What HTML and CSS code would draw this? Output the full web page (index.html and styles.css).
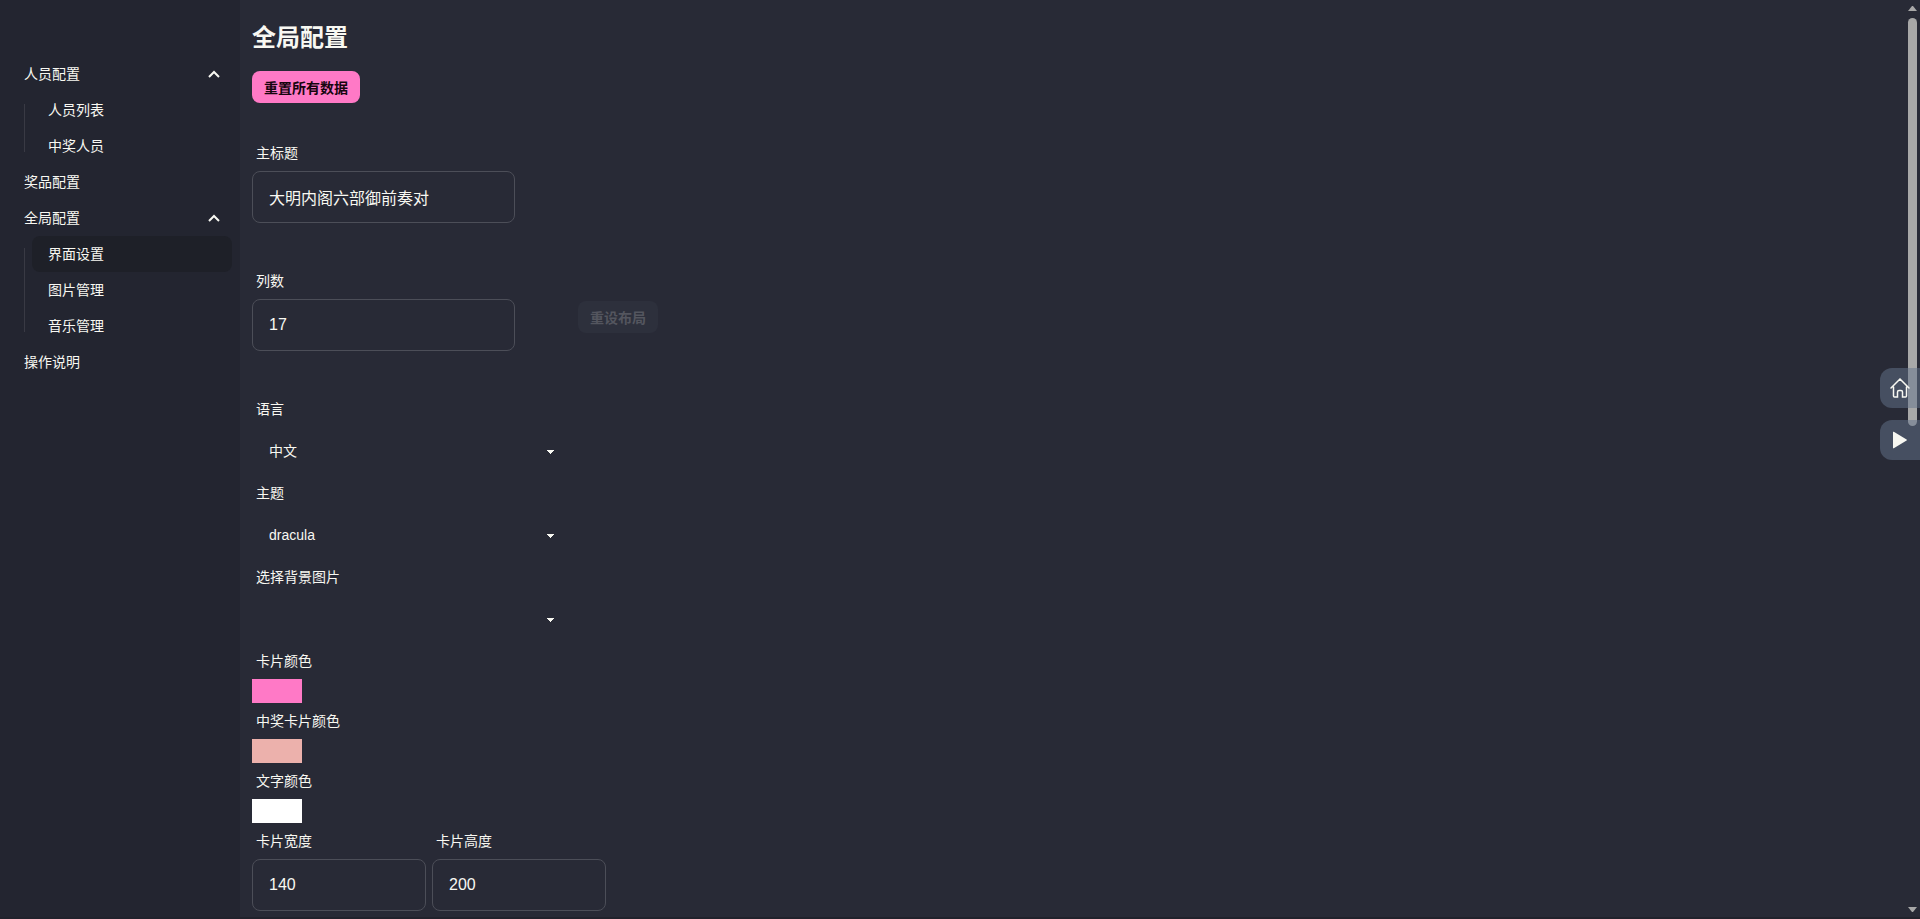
FILE: index.html
```html
<!DOCTYPE html>
<html lang="zh-CN">
<head>
    <meta charset="UTF-8">
    <title>全局配置</title>
    <link rel="stylesheet" href="styles.css">
</head>
<body>
    <div class="layout">
        <nav class="sidebar">
            <ul class="menu">
                <li>
                    <details open>
                        <summary>人员配置
                            <svg class="chevron" viewBox="0 0 12 8"><path d="M1 7l5-5 5 5"/></svg>
                        </summary>
                        <ul class="submenu">
                            <li><a href="#">人员列表</a></li>
                            <li><a href="#">中奖人员</a></li>
                        </ul>
                    </details>
                </li>
                <li><a href="#">奖品配置</a></li>
                <li>
                    <details open>
                        <summary>全局配置
                            <svg class="chevron" viewBox="0 0 12 8"><path d="M1 7l5-5 5 5"/></svg>
                        </summary>
                        <ul class="submenu">
                            <li><a href="#" class="active">界面设置</a></li>
                            <li><a href="#">图片管理</a></li>
                            <li><a href="#">音乐管理</a></li>
                        </ul>
                    </details>
                </li>
                <li><a href="#">操作说明</a></li>
            </ul>
        </nav>

        <main class="content">
            <h2>全局配置</h2>
            <button type="button" class="btn btn-primary">重置所有数据</button>

            <div class="form">
                <div class="row tall">
                    <div class="field">
                        <label for="topTitle">主标题</label>
                        <input type="text" id="topTitle" class="input" value="大明内阁六部御前奏对">
                    </div>
                </div>
                <div class="row tall">
                    <div class="field">
                        <label for="columns">列数</label>
                        <input type="number" id="columns" class="input" value="17">
                    </div>
                    <button type="button" class="btn" disabled>重设布局</button>
                </div>
                <div class="field">
                    <label for="language">语言</label>
                    <select id="language" class="select">
                        <option>中文</option>
                        <option>English</option>
                    </select>
                </div>
                <div class="field">
                    <label for="theme">主题</label>
                    <select id="theme" class="select">
                        <option>dracula</option>
                        <option>light</option>
                        <option>dark</option>
                    </select>
                </div>
                <div class="field">
                    <label for="background">选择背景图片</label>
                    <select id="background" class="select">
                        <option></option>
                    </select>
                </div>
                <div class="field">
                    <label for="cardColor">卡片颜色</label>
                    <input type="color" id="cardColor" class="color" value="#ff79c6">
                </div>
                <div class="field">
                    <label for="luckyColor">中奖卡片颜色</label>
                    <input type="color" id="luckyColor" class="color" value="#ecb1ac">
                </div>
                <div class="field">
                    <label for="textColor">文字颜色</label>
                    <input type="color" id="textColor" class="color" value="#ffffff">
                </div>
                <div class="row">
                    <div class="field small">
                        <label for="cardWidth">卡片宽度</label>
                        <input type="number" id="cardWidth" class="input" value="140">
                    </div>
                    <div class="field small">
                        <label for="cardHeight">卡片高度</label>
                        <input type="number" id="cardHeight" class="input" value="200">
                    </div>
                </div>
            </div>
        </main>
    </div>

    <div class="scrollbar" aria-hidden="true">
        <span class="arrow up"></span>
        <span class="thumb"></span>
        <span class="arrow down"></span>
    </div>

    <div class="float-buttons">
        <button type="button" aria-label="首页">
            <svg viewBox="0 0 20 20"><path class="line" d="M1 10L10 1l9 9M3.500 9v9q0 1 1 1h3v-5q0-1.500 1.500-1.500h2q1.500 0 1.500 1.500v5h3q1 0 1-1V9"/></svg>
        </button>
        <button type="button" aria-label="播放">
            <svg viewBox="0 0 20 20"><path class="solid" d="M3 2.300v15.400q0 1 .8.500l12.800-7.600q.8-.6 0-1.200L3.800 1.800q-.8-.5-.8.500z"/></svg>
        </button>
    </div>
</body>
</html>
```
FILE: styles.css
```css
* {
    box-sizing: border-box;
}
body {
    margin: 0;
    height: 100vh;
    overflow: hidden;
    background-color: #282a36;
    color: #f8f8f2;
    font-family: "Liberation Sans", "Noto Sans CJK SC", sans-serif;
    font-size: 14px;
    line-height: 20px;
    border-bottom: 2px solid #21222c;
}
button, input, select {
    font-family: inherit;
    color: inherit;
}
.layout {
    display: flex;
    height: 100%;
}

/* sidebar */
.sidebar {
    flex: none;
    width: 240px;
    padding: 56px 8px 0;
    background-color: #232530;
}
.menu, .submenu {
    list-style: none;
    margin: 0;
    padding: 0;
}
.menu a, .menu summary {
    display: flex;
    align-items: center;
    justify-content: space-between;
    padding: 8px 12px 8px 16px;
    border-radius: 8px;
    color: inherit;
    text-decoration: none;
    cursor: pointer;
}
.menu .active {
    background-color: #1e2028;
}
.chevron {
    width: 12px;
    height: 8px;
    fill: none;
    stroke: currentColor;
    stroke-width: 2;
}
.submenu {
    position: relative;
    margin-left: 16px;
    padding-left: 8px;
}
.submenu::before {
    content: "";
    position: absolute;
    left: 0;
    top: 12px;
    bottom: 12px;
    width: 1px;
    background-color: #393a44;
}

/* content */
.content {
    flex: 1;
    padding: 22px 12px 0;
    overflow: hidden;
}
h2 {
    margin: 0 0 17px;
    font-size: 24px;
    line-height: 32px;
}
.btn {
    display: block;
    height: 32px;
    padding: 0 12px;
    border: 0;
    border-radius: 8px;
    font-size: 14px;
    font-weight: 600;
}
.btn-primary {
    background-color: #ff79c6;
    color: #16050e;
}
.btn:disabled {
    background-color: #2d303c;
    color: #54565f;
}
.form {
    margin-top: 32px;
}
.row {
    display: flex;
    gap: 6px;
}
.row.tall {
    align-items: center;
    margin-bottom: 20px;
}
.row.tall .field {
    padding-bottom: 20px;
}
.field {
    width: 320px;
}
.field.small {
    width: 174px;
}
.field label {
    display: block;
    padding: 8px 4px;
}
.input {
    display: block;
    width: 263px;
    height: 52px;
    padding: 0 16px;
    background: none;
    border: 1px solid #4c4e58;
    border-radius: 8px;
    font-size: 16px;
}
.small .input {
    width: 100%;
}
input[type="number"] {
    appearance: textfield;
}
.select {
    display: block;
    appearance: none;
    width: 100%;
    height: 48px;
    padding: 0 40px 0 17px;
    border: 0;
    border-radius: 8px;
    font-size: 14px;
    background: linear-gradient(45deg, transparent 50%, currentColor 50%) right 21px top 23px / 4px 4px no-repeat,
        linear-gradient(135deg, currentColor 50%, transparent 50%) right 17px top 23px / 4px 4px no-repeat;
}
.color {
    display: block;
    appearance: none;
    width: 50px;
    height: 24px;
    padding: 0;
    border: 0;
    background: none;
}
.color::-webkit-color-swatch-wrapper {
    padding: 0;
}
.color::-webkit-color-swatch {
    border: 0;
}

/* scrollbar */
.scrollbar {
    position: fixed;
    top: 0;
    right: 0;
    bottom: 2px;
    width: 15px;
    padding: 6px 3px 5px;
    display: flex;
    flex-direction: column;
}
.arrow {
    border: 4px solid transparent;
    border-top-width: 0;
    border-bottom: 5px solid #a8a8a8;
}
.arrow.down {
    margin-top: auto;
    border-top: 5px solid #a8a8a8;
    border-bottom-width: 0;
}
.thumb {
    height: 45%;
    margin-top: 7px;
    border-radius: 5px;
    background-color: #a8a8a8;
}

/* floating buttons */
.float-buttons {
    position: fixed;
    right: 0;
    top: 40%;
    display: flex;
    flex-direction: column;
    gap: 12px;
}
.float-buttons button {
    display: flex;
    align-items: center;
    width: 40px;
    height: 40px;
    padding: 0 10px;
    border: 0;
    border-radius: 12px 0 0 12px;
    background-color: rgba(100, 116, 139, 0.5);
}
.float-buttons svg {
    width: 20px;
    height: 20px;
}
.line {
    fill: none;
    stroke: currentColor;
    stroke-width: 1.5;
    stroke-linecap: round;
}
.solid {
    fill: currentColor;
}
```
